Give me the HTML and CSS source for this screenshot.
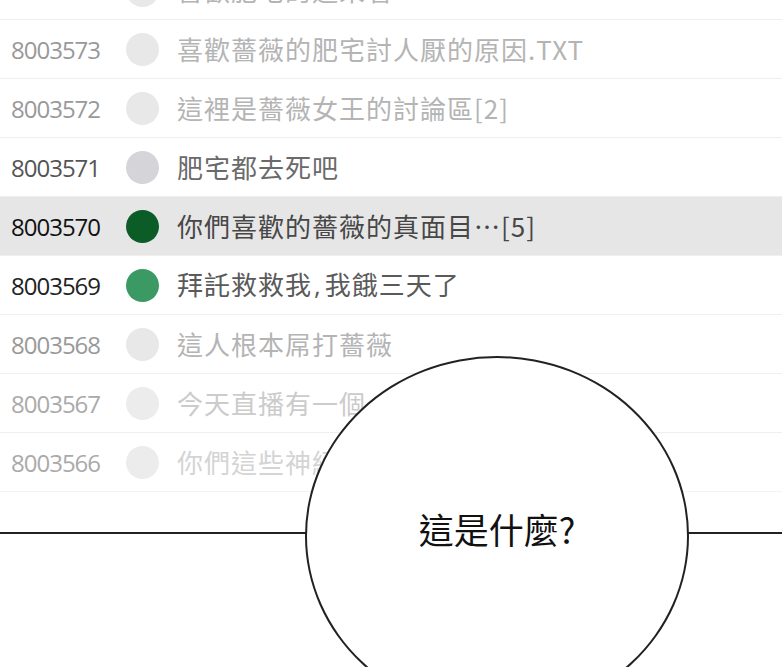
FILE: index.html
```html
<!DOCTYPE html>
<html lang="zh-Hant">
<head>
    <meta charset="UTF-8">
    <meta name="viewport" content="width=device-width, initial-scale=1.0">
    <title>討論區</title>
    <link rel="stylesheet" href="styles.css">
</head>
<body>
    <div class="panel">
        <ul class="threads">
            <li class="thread faded">
                <span class="num">8003574</span>
                <span class="dot"></span>
                <span class="title">喜歡肥宅的過來看</span>
            </li>
            <li class="thread faded">
                <span class="num">8003573</span>
                <span class="dot"></span>
                <span class="title">喜歡薔薇的肥宅討人厭的原因.TXT</span>
            </li>
            <li class="thread faded">
                <span class="num">8003572</span>
                <span class="dot"></span>
                <span class="title">這裡是薔薇女王的討論區[2]</span>
            </li>
            <li class="thread read">
                <span class="num">8003571</span>
                <span class="dot"></span>
                <span class="title">肥宅都去死吧</span>
            </li>
            <li class="thread active">
                <span class="num">8003570</span>
                <span class="dot"></span>
                <span class="title">你們喜歡的薔薇的真面目…[5]</span>
            </li>
            <li class="thread fresh">
                <span class="num">8003569</span>
                <span class="dot"></span>
                <span class="title">拜託救救我<span class="comma">,</span>我餓三天了</span>
            </li>
            <li class="thread faded">
                <span class="num">8003568</span>
                <span class="dot"></span>
                <span class="title">這人根本屌打薔薇</span>
            </li>
            <li class="thread fading">
                <span class="num">8003567</span>
                <span class="dot"></span>
                <span class="title">今天直播有一個</span>
            </li>
            <li class="thread fading more">
                <span class="num">8003566</span>
                <span class="dot"></span>
                <span class="title">你們這些神經</span>
            </li>
        </ul>

        <div class="rule"></div>

        <div class="bubble">這是什麼?</div>
    </div>
</body>
</html>
```

FILE: styles.css
```css
body {
    margin: 0;
    background: #fff;
    overflow: hidden;
}
.panel {
    position: relative;
    height: 667px;
    overflow: hidden;
    background: #fff;
}
.threads {
    list-style: none;
    margin: -39px 0 0 0;
    padding: 0;
}
.thread {
    display: flex;
    align-items: center;
    height: 58px;
    padding-left: 11px;
    border-bottom: 1px solid #efefef;
}
.num {
    width: 115px;
    font-family: "Open Sans", "Liberation Sans", sans-serif;
    font-size: 24px;
    letter-spacing: -1px;
    color: #999;
}
.dot {
    width: 33px;
    height: 33px;
    border-radius: 50%;
    background: #e8e8e8;
    margin-right: 18px;
}
.title {
    font-family: "Noto Sans CJK TC", "Open Sans", sans-serif;
    font-size: 26px;
    letter-spacing: 1px;
    color: #b4b4b4;
    white-space: nowrap;
    margin-top: -2px;
}
.comma {
    font-family: "Open Sans", sans-serif;
    letter-spacing: 0;
    margin: 0 4px 0 2px;
}
.thread.read .num {
    color: #555;
}
.thread.read .dot {
    background: #d5d5d9;
}
.thread.read .title {
    color: #6a6a6a;
}
.thread.active {
    background: #e6e6e6;
}
.thread.active .num {
    color: #111;
}
.thread.active .dot {
    background: #0c5c28;
}
.thread.active .title {
    color: #474747;
}
.thread.fresh .num {
    color: #222;
}
.thread.fresh .dot {
    background: #3b9a64;
}
.thread.fresh .title {
    color: #5a5a5a;
}
.thread.fading .num {
    color: #aaa;
}
.thread.fading .dot {
    background: #ececec;
}
.thread.fading .title {
    color: #cbcbcb;
}
.thread.fading.more .title {
    color: #d4d4d4;
}
.thread.fading.more {
    border-bottom-color: #f3f3f3;
}
.rule {
    margin-top: 40px;
    height: 2px;
    background: #222;
}
.bubble {
    position: absolute;
    left: 305px;
    top: 356px;
    width: 380px;
    height: 340px;
    border: 2px solid #222;
    border-radius: 50%;
    background: #fff;
    display: flex;
    align-items: center;
    justify-content: center;
    font-family: "Noto Sans CJK TC", sans-serif;
    font-size: 35px;
    color: #111;
    padding-bottom: 16px;
    box-sizing: content-box;
}
```
